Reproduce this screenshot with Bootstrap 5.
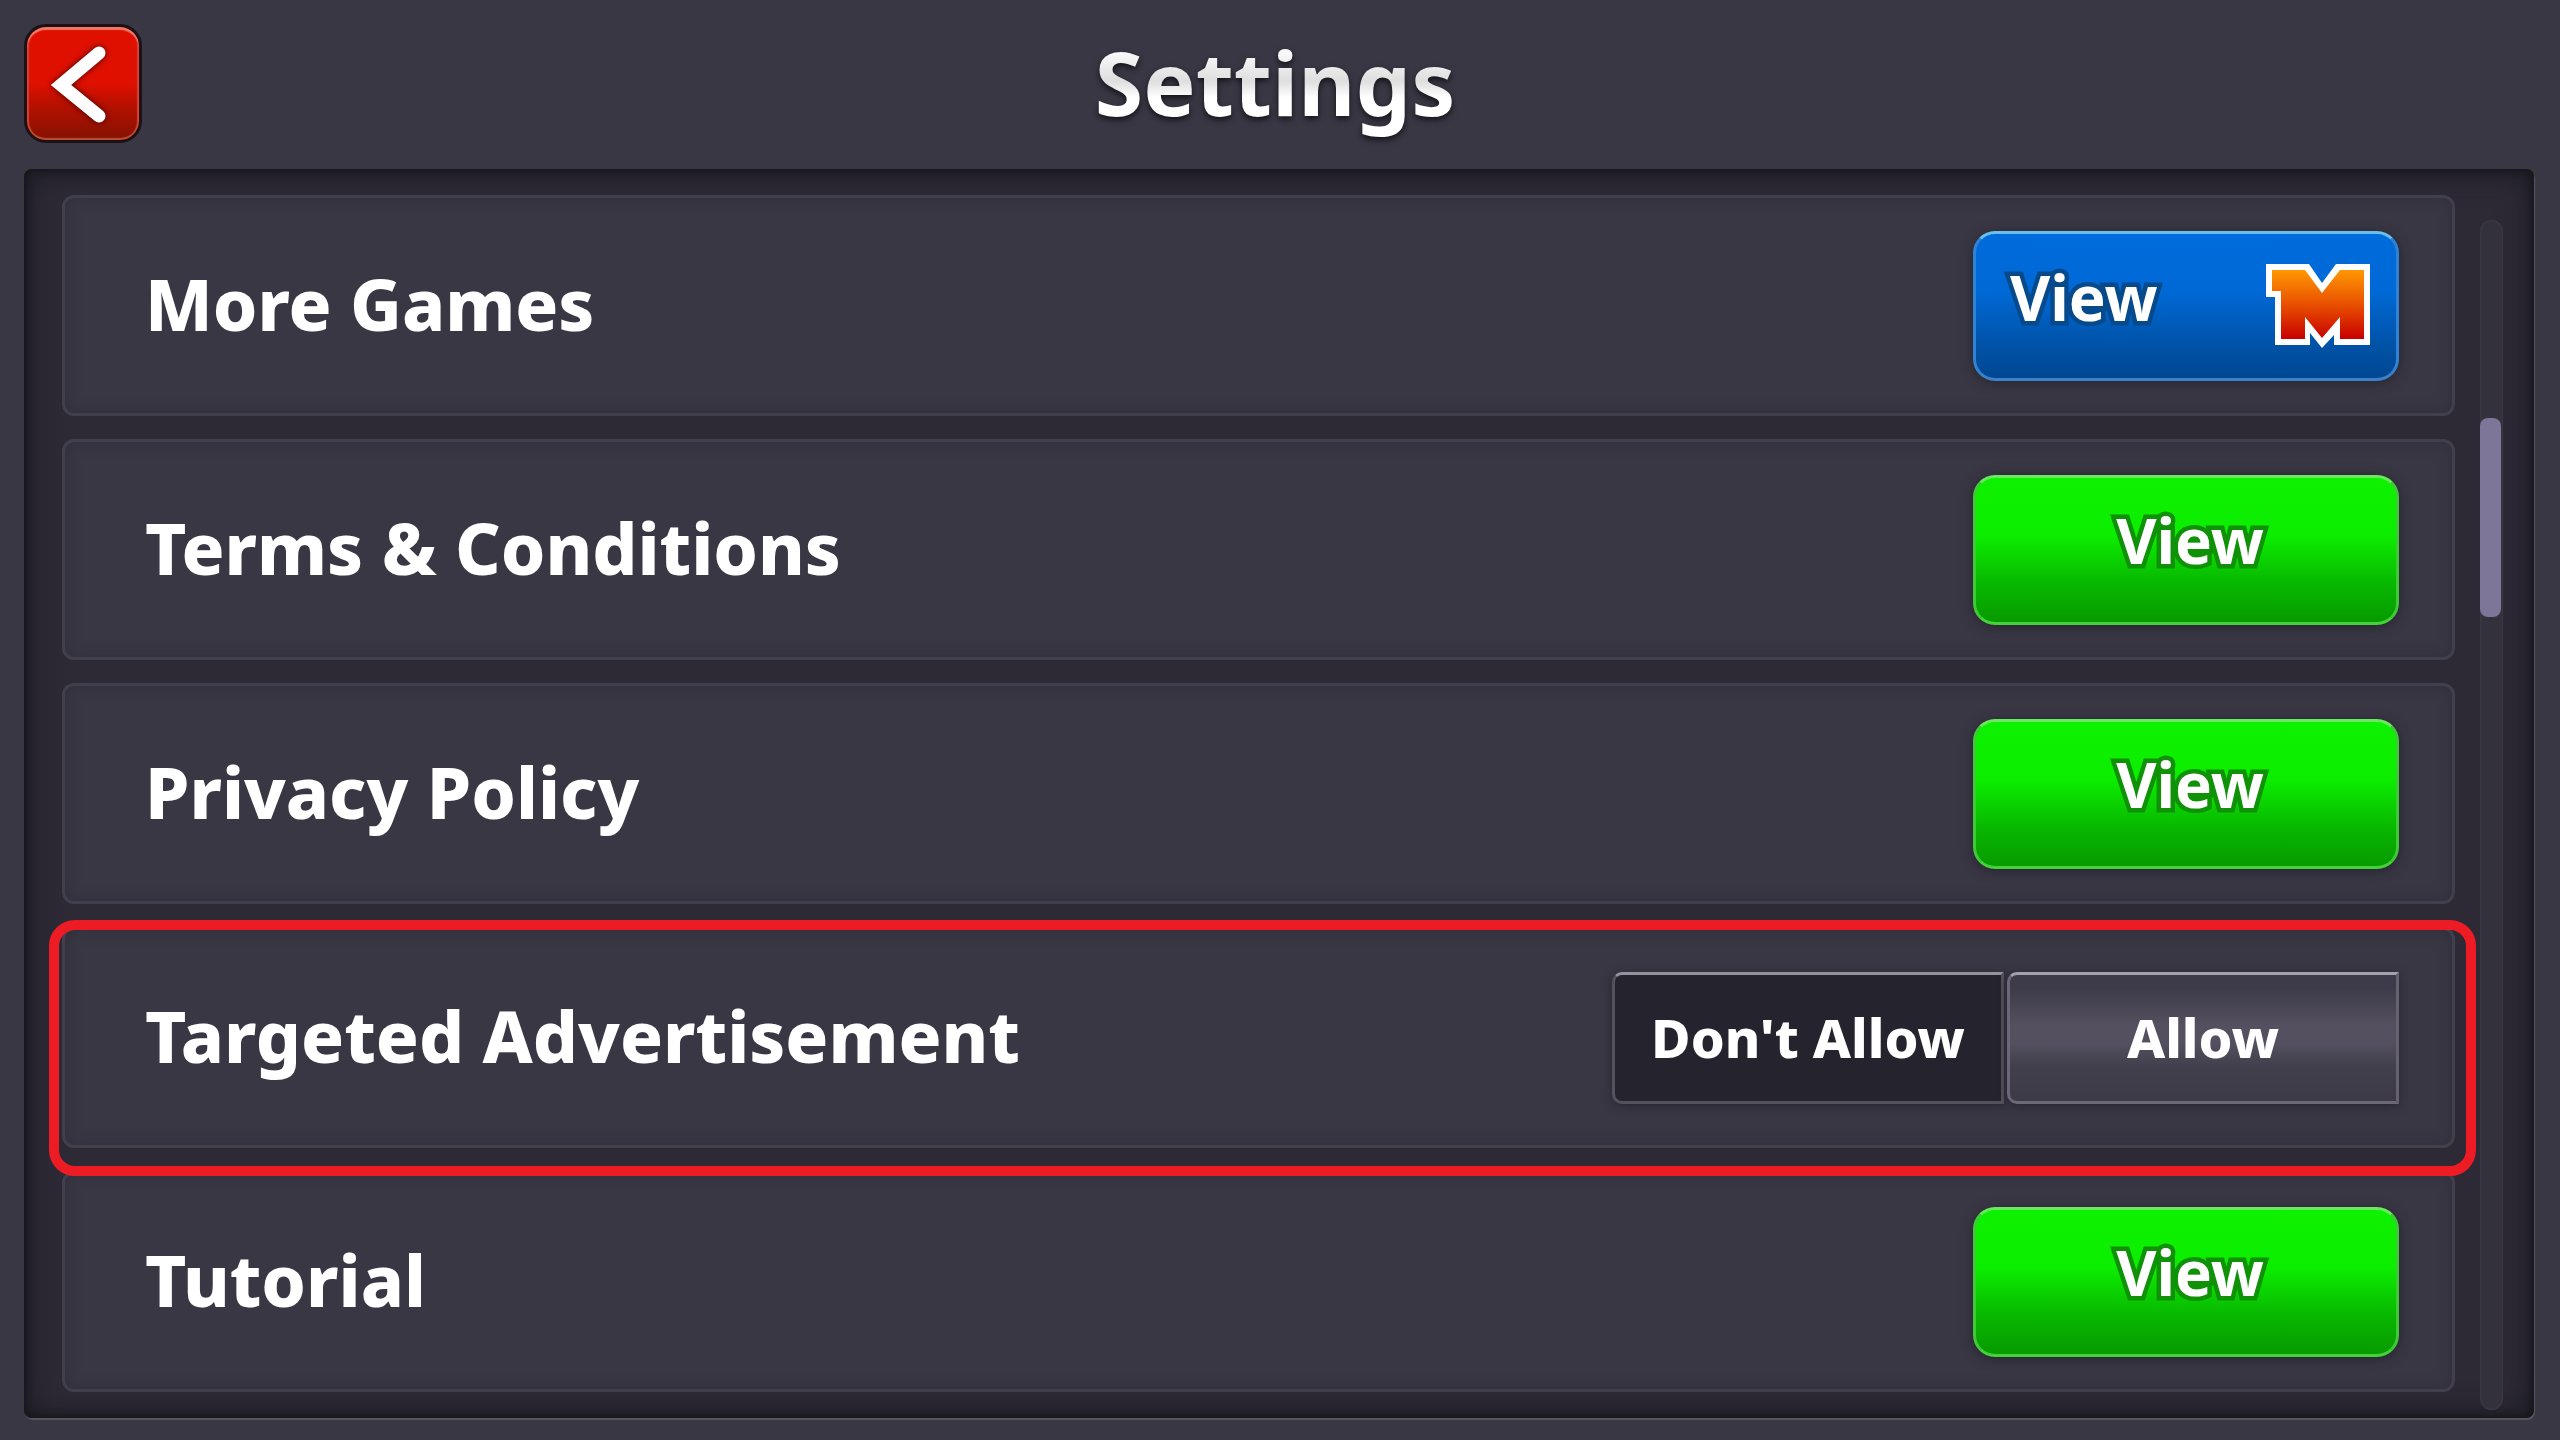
<!DOCTYPE html>
<html lang="en">
<head>
<meta charset="utf-8">
<meta name="viewport" content="width=device-width, initial-scale=1">
<title>Settings</title>
<link href="https://cdn.jsdelivr.net/npm/bootstrap@5.3.0/dist/css/bootstrap.min.css" rel="stylesheet">
<style>
  body { background: #393744; color: #fff; font-family: "Noto Sans", "Open Sans", sans-serif; font-weight: 700; }
  .top-bar { display: grid; grid-template-columns: 1fr auto 1fr; padding: 24px 34px 26px 24px; }
  .back-btn { width: 118px; height: 119px; border: 3px solid #1d1116; border-radius: 22px; color: #fff;
    background: linear-gradient(#e01000, #e01000 50%, #b81000 68%, #841200);
    box-shadow: inset 0 3px 1px #ef7868, inset 0 -2px 1px #b85038, inset 2px 0 1px #d84030, inset -2px 0 1px #d84030; }
  .back-btn svg { filter: drop-shadow(0 0 3px #400400); }
  .page-title { font-size: 88px; line-height: 116px; padding-bottom: 3px; font-weight: 700;
    background: linear-gradient(#f8f8f8 25%, #dedede 48%, #fff 62%);
    -webkit-background-clip: text; background-clip: text; color: transparent;
    filter: drop-shadow(0 3px 3px rgba(0,0,0,.65)); }
  .settings-panel { margin: 0 26px 22px 24px; padding: 26px 31px 26px 38px; gap: 25px; background: #2d2a36; border-radius: 8px;
    box-shadow: inset 0 0 32px #17161b, inset 0 0 10px #0e0d12, 1px 2px 1px #5a575f; }
  .settings-list { gap: 23px; }
  .setting { min-height: 221px; padding: 0 53px 0 80px; border: 3px solid #413f4b; border-radius: 12px; background: #393744;
    box-shadow: inset 0 0 14px #302e39; }
  .setting-name { font-size: 71px; line-height: 96px; font-weight: 800; padding-bottom: 4px; }
  .view-btn { width: 426px; height: 150px; padding: 0 26px 20px 34px; border: 3px solid; border-radius: 22px;
    color: #fff; font-size: 62px; line-height: 88px; font-weight: 700; paint-order: stroke fill; }
  .view-btn:hover { color: #fff; }
  .view-green { background: linear-gradient(#0df200, #0cee00 40%, #08b800 72%, #079800); background-origin: border-box;
    border-color: #6be860 #3fc936 #43d338 #3fc936; box-shadow: 0 2px 12px #262430; -webkit-text-stroke: 9px #109208; }
  .view-blue { background: linear-gradient(#006bdc, #0069d6 40%, #0053a8 75%, #004690); background-origin: border-box;
    border-color: #69c0ea #2f83d6 #3b80c8 #2f83d6; box-shadow: 0 2px 12px #262430; }
  .view-blue span { -webkit-text-stroke: 9px #064a8c; paint-order: stroke fill; }
  .view-blue { padding: 0 26px 0 34px; }
  .view-blue span { padding-bottom: 18px; }
  .ad-choice { gap: 3px; }
  .choice { width: 392px; height: 132px; padding-bottom: 2px; font-size: 54px; line-height: 70px; font-weight: 800; color: #fff;
    border: 3px solid; border-color: #94929c #55525e #55525e #55525e; border-radius: 10px 0 0 10px; background: #25232e;
    box-shadow: 0 2px 10px #282631; }
  .btn-check:checked + .choice { color: #fff; background: linear-gradient(#3d3b49 10%, #54505f 40%, #54505f 54%, #42404d 72%, #3c3a46);
    border-color: #a3a1ac #65626e #6c6975 #6b6778; }
  .flagged { position: relative; }
  .flagged::after { content: ""; position: absolute; inset: -10px -24px -31px -16px; border: 10px solid #ed1c24; border-radius: 26px; pointer-events: none; }
  .scroll-track { width: 23px; margin: 25px 0 -18px; padding: 198px 2px 0 0; border-radius: 12px; background: #33313c; box-shadow: inset 0 0 2px 1px #3d3a46; }
  .scroll-thumb { height: 199px; border-radius: 8px; background: #7d7698; }
</style>
</head>
<body>
<header class="top-bar align-items-center">
  <button type="button" class="back-btn p-0 d-flex align-items-center justify-content-center" aria-label="Back">
    <svg width="112" height="113" viewBox="27 27 112 113" fill="none" stroke="#fff" stroke-width="13" stroke-linecap="round" stroke-linejoin="miter" aria-hidden="true"><path d="M99 53 61 85l38 31"/></svg>
  </button>
  <h1 class="page-title m-0">Settings</h1>
</header>
<main class="settings-panel d-flex">
  <div class="settings-list d-flex flex-column flex-grow-1">
    <section class="setting d-flex align-items-center justify-content-between">
      <h2 class="setting-name m-0">More Games</h2>
      <button type="button" class="btn view-btn view-blue d-flex align-items-center justify-content-between">
        <span>View</span>
        <svg width="104" height="84" viewBox="0 0 104 84" aria-hidden="true">
          <defs><linearGradient id="flame" x1="0" y1="0" x2="0" y2="1"><stop offset="0" stop-color="#ff9800"/><stop offset=".5" stop-color="#e85000"/><stop offset="1" stop-color="#c80000"/></linearGradient></defs>
          <path fill="#fff" d="M0 0H43L56 19 70 0H104V81H68V71L56 84 44 69V81H9V33H0Z"/>
          <path fill="url(#flame)" d="M6 6H39L56 29 74 6H98V75H74V53L56 74 39 53V75H15V27H6Z"/>
        </svg>
      </button>
    </section>
    <section class="setting d-flex align-items-center justify-content-between">
      <h2 class="setting-name m-0">Terms &amp; Conditions</h2>
      <button type="button" class="btn view-btn view-green">View</button>
    </section>
    <section class="setting d-flex align-items-center justify-content-between">
      <h2 class="setting-name m-0">Privacy Policy</h2>
      <button type="button" class="btn view-btn view-green">View</button>
    </section>
    <section class="setting flagged d-flex align-items-center justify-content-between">
      <h2 class="setting-name m-0" id="ad-title">Targeted Advertisement</h2>
      <div class="ad-choice d-flex" role="group" aria-labelledby="ad-title">
        <input type="radio" class="btn-check" name="ads" id="ads-off">
        <label class="choice d-flex align-items-center justify-content-center" for="ads-off">Don't Allow</label>
        <input type="radio" class="btn-check" name="ads" id="ads-on" checked>
        <label class="choice d-flex align-items-center justify-content-center" for="ads-on">Allow</label>
      </div>
    </section>
    <section class="setting d-flex align-items-center justify-content-between">
      <h2 class="setting-name m-0">Tutorial</h2>
      <button type="button" class="btn view-btn view-green">View</button>
    </section>
  </div>
  <div class="scroll-track" aria-hidden="true"><div class="scroll-thumb"></div></div>
</main>
<script src="https://cdn.jsdelivr.net/npm/bootstrap@5.3.0/dist/js/bootstrap.bundle.min.js"></script>
</body>
</html>
